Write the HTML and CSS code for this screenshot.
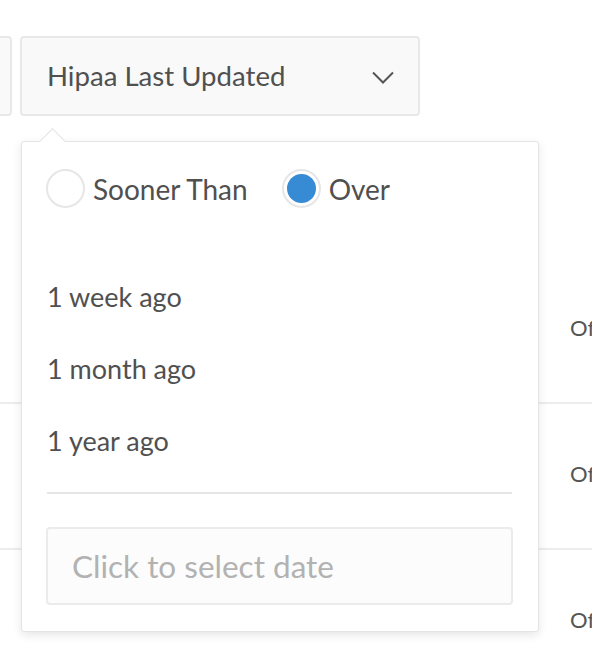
FILE: index.html
```html
<!DOCTYPE html>
<html>
<head>
<meta charset="utf-8">
<link rel="stylesheet" href="styles.css">
</head>
<body>
<div class="page">
  <div class="toolbar">
    <div class="filter filter-prev"></div>
    <div class="filter">
      <span class="filter-label">Hipaa Last Updated</span>
      <svg class="chevron" width="22" height="13" viewBox="0 0 22 13"><path d="M1 1.5 L11 11.5 L21 1.5" fill="none" stroke="#555" stroke-width="2"/></svg>
    </div>
  </div>
  <div class="table">
    <div class="row"><span class="cell">Off</span></div>
    <div class="row"><span class="cell">Off</span></div>
    <div class="row"><span class="cell">Off</span></div>
  </div>

  <div class="popup">
    <div class="radios">
      <label class="radio"><span class="radio-dot"></span><span class="radio-text">Sooner Than</span></label>
      <label class="radio checked"><span class="radio-dot"></span><span class="radio-text">Over</span></label>
    </div>
    <ul class="options">
      <li>1 week ago</li>
      <li>1 month ago</li>
      <li>1 year ago</li>
    </ul>
    <div class="divider"></div>
    <div class="date-input">Click to select date</div>
  </div>
</div>
</body>
</html>
```
FILE: styles.css
```css
html, body {
  margin: 0;
  padding: 0;
  background: #fff;
}
body {
  width: 592px;
  height: 664px;
  overflow: hidden;
  font-family: Lato, "Open Sans", sans-serif;
  color: #505050;
}
.page {
  position: relative;
  height: 664px;
}
.toolbar {
  display: flex;
  gap: 8px;
  padding-top: 36px;
  margin-left: -388px;
}
.filter {
  box-sizing: border-box;
  flex: 0 0 400px;
  height: 80px;
  background: #f9f9f9;
  border: 2px solid #e8e8e8;
  border-radius: 4px;
  display: flex;
  align-items: center;
  justify-content: space-between;
  padding: 0 24px 0 25px;
}
.filter-label {
  font-size: 27.6px;
  line-height: 34px;
  color: #505050;
}
.chevron {
  display: block;
  margin-top: 2px;
}
.table {
  margin-top: 142px;
}
.row {
  box-sizing: border-box;
  height: 146px;
  border-bottom: 2px solid #ececec;
  display: flex;
  align-items: center;
  padding: 0 0 6px 570px;
}
.cell {
  font-size: 22px;
  color: #555;
  white-space: nowrap;
}
.popup {
  position: absolute;
  left: 21px;
  top: 141px;
  box-sizing: border-box;
  width: 518px;
  height: 491px;
  background: #fff;
  border: 1px solid #e4e4e4;
  border-radius: 3px;
  box-shadow: 0 3px 10px rgba(0, 0, 0, 0.10);
  padding: 27px 25px 25px 24px;
}
.popup::before {
  content: "";
  position: absolute;
  top: -10.5px;
  left: 21px;
  width: 19px;
  height: 19px;
  background: #fff;
  border-top: 1px solid #e4e4e4;
  border-left: 1px solid #e4e4e4;
  box-sizing: border-box;
  transform: rotate(45deg);
}
.radios {
  display: flex;
  gap: 34px;
  height: 38px;
}
.radio {
  display: flex;
  align-items: center;
  gap: 8px;
}
.radio-dot {
  box-sizing: border-box;
  width: 39px;
  height: 39px;
  border-radius: 50%;
  border: 2px solid #e6e6e6;
  background: #fff;
  display: flex;
  align-items: center;
  justify-content: center;
}
.checked .radio-dot::after {
  content: "";
  width: 29px;
  height: 29px;
  border-radius: 50%;
  background: #378bd5;
}
.radio-text {
  font-size: 28px;
  line-height: 38px;
  padding-top: 2px;
}
.options {
  list-style: none;
  margin: 54px 0 0 0;
  padding: 0;
}
.options li {
  font-size: 27px;
  line-height: 72px;
  height: 72px;
  padding-left: 1px;
}
.divider {
  margin: 15px 1px 0 1px;
  height: 2px;
  background: #e6e6e6;
}
.date-input {
  box-sizing: border-box;
  margin-top: 33px;
  height: 78px;
  border: 2px solid #ebebeb;
  border-radius: 4px;
  background: #fcfcfc;
  padding-left: 24px;
  display: flex;
  align-items: center;
  font-size: 31.5px;
  color: #b2b2b2;
}
```
